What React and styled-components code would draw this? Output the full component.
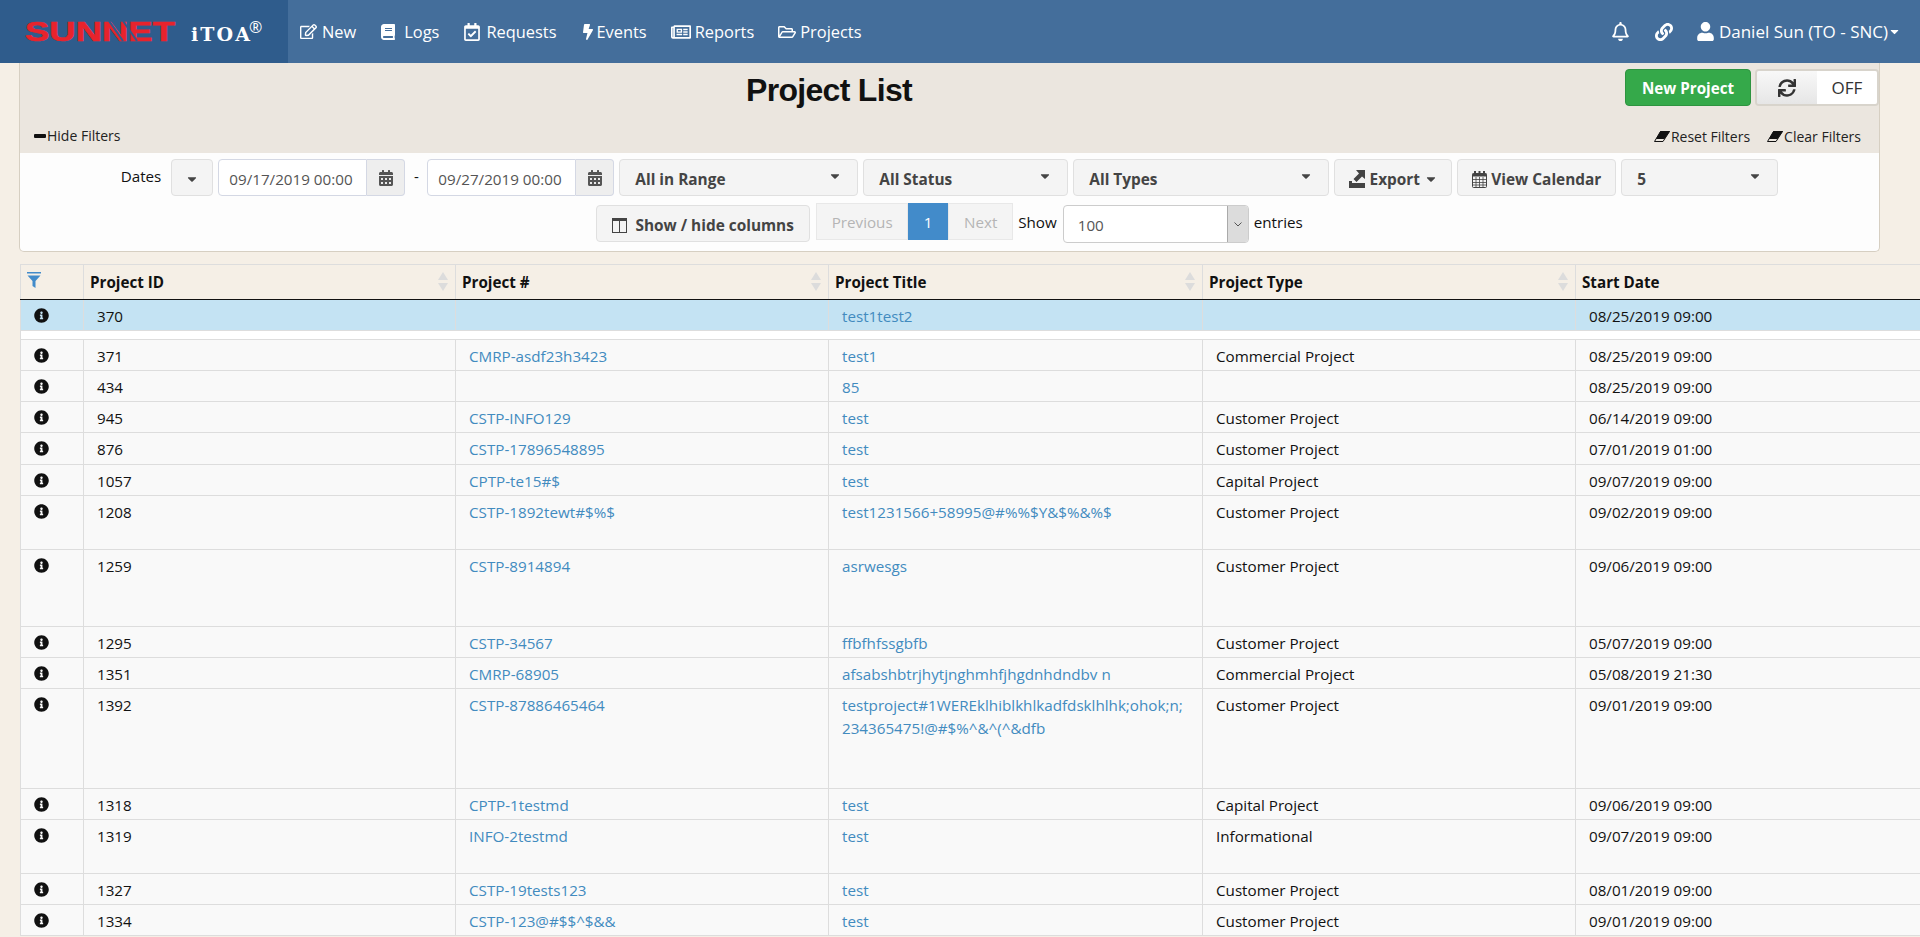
import styled, { createGlobalStyle } from "styled-components";
import {
  FaRegEdit,
  FaBook,
  FaRegCalendarCheck,
  FaBolt,
  FaRegNewspaper,
  FaRegFolderOpen,
  FaRegBell,
  FaLink,
  FaUser,
  FaSync,
  FaInfoCircle,
  FaCalendarAlt,
  FaCaretDown,
} from "react-icons/fa";

const GlobalStyle = createGlobalStyle`
  html, body {
    margin: 0;
    height: 937px;
    overflow: hidden;
    background: #f5efe6;
    font-family: "Open Sans", sans-serif;
    font-size: 15.2px;
    color: #111;
  }
  * { box-sizing: border-box; }
`;

const navItems = [
  { label: "New", Icon: FaRegEdit, gap: 5, size: 17 },
  { label: "Logs", Icon: FaBook, gap: 8, size: 16 },
  { label: "Requests", Icon: FaRegCalendarCheck, gap: 5, size: 18 },
  { label: "Events", Icon: FaBolt, gap: 0, size: 16 },
  { label: "Reports", Icon: FaRegNewspaper, gap: 4, size: 20 },
  { label: "Projects", Icon: FaRegFolderOpen, gap: 4, size: 18 },
];

const rows = [
  { id: 371, num: "CMRP-asdf23h3423", title: "test1", type: "Commercial Project", date: "08/25/2019 09:00", h: 31 },
  { id: 434, num: "", title: "85", type: "", date: "08/25/2019 09:00", h: 31 },
  { id: 945, num: "CSTP-INFO129", title: "test", type: "Customer Project", date: "06/14/2019 09:00", h: 31 },
  { id: 876, num: "CSTP-17896548895", title: "test", type: "Customer Project", date: "07/01/2019 01:00", h: 32 },
  { id: 1057, num: "CPTP-te15#$", title: "test", type: "Capital Project", date: "09/07/2019 09:00", h: 31 },
  { id: 1208, num: "CSTP-1892tewt#$%$", title: "test1231566+58995@#%%$Y&$%&%$", type: "Customer Project", date: "09/02/2019 09:00", h: 54 },
  { id: 1259, num: "CSTP-8914894", title: "asrwesgs", type: "Customer Project", date: "09/06/2019 09:00", h: 77 },
  { id: 1295, num: "CSTP-34567", title: "ffbfhfssgbfb", type: "Customer Project", date: "05/07/2019 09:00", h: 31 },
  { id: 1351, num: "CMRP-68905", title: "afsabshbtrjhytjnghmhfjhgdnhdndbv n", type: "Commercial Project", date: "05/08/2019 21:30", h: 31 },
  { id: 1392, num: "CSTP-87886465464", title: "testproject#1WEREklhiblkhlkadfdsklhlhk;ohok;n;\n234365475!@#$%^&^(^&dfb", type: "Customer Project", date: "09/01/2019 09:00", h: 100 },
  { id: 1318, num: "CPTP-1testmd", title: "test", type: "Capital Project", date: "09/06/2019 09:00", h: 31 },
  { id: 1319, num: "INFO-2testmd", title: "test", type: "Informational", date: "09/07/2019 09:00", h: 54 },
  { id: 1327, num: "CSTP-19tests123", title: "test", type: "Customer Project", date: "08/01/2019 09:00", h: 31 },
  { id: 1334, num: "CSTP-123@#$$^$&&", title: "test", type: "Customer Project", date: "09/01/2019 09:00", h: 31 },
];

const columns = [
  { label: "Project ID", w: 372, sort: true },
  { label: "Project #", w: 373, sort: true },
  { label: "Project Title", w: 374, sort: true },
  { label: "Project Type", w: 373, sort: true },
  { label: "Start Date", w: 373, sort: false },
];

const Navbar = styled.nav`
  display: flex;
  align-items: center;
  height: 63px;
  background: #446e9b;
  color: #fff;
`;

const Brand = styled.div`
  display: flex;
  align-items: center;
  width: 288px;
  height: 100%;
  background: #2f5c8c;
  padding: 0 0 2px 25px;
`;

const NavLinks = styled.div`
  display: flex;
  align-items: center;
  gap: 24px;
  padding-left: 12px;
`;

const NavLink = styled.a`
  display: flex;
  align-items: center;
  gap: ${({ $gap }) => $gap}px;
  font-size: 16.4px;
  color: #fff;
`;

const NavRight = styled.div`
  display: flex;
  align-items: center;
  margin-left: auto;
  padding-right: 19px;
`;

const ChainIcon = styled(FaLink)`
  margin-left: 25px;
`;

const UserName = styled.span`
  display: flex;
  align-items: center;
  gap: 4px;
  font-size: 17px;
  margin-left: 23px;
`;

const UserCaret = styled(FaCaretDown)`
  margin-left: -4px;
`;

const Panel = styled.section`
  width: 1861px;
  margin-left: 19px;
  border: 1px solid #d6cfc2;
  border-top: 0;
  border-radius: 0 0 5px 5px;
  background: #fdfdfd;
`;

const PanelHead = styled.div`
  height: 90px;
  background: #ebe6df;
  padding-top: 6px;
`;

const HeadTop = styled.div`
  display: flex;
  align-items: flex-start;
  height: 37px;
`;

const Title = styled.h1`
  flex: 1;
  margin: 0;
  padding-left: 13px;
  text-align: center;
  font-family: "Liberation Sans", sans-serif;
  font-size: 32px;
  line-height: 43px;
  font-weight: 700;
  letter-spacing: -0.7px;
  color: #111;
`;

const NewButton = styled.button`
  width: 126px;
  height: 37px;
  border: 1px solid #2e9440;
  border-radius: 4px;
  background: #35a94a;
  color: #fff;
  font: 700 15.2px "Open Sans", sans-serif;
`;

const Toggle = styled.div`
  display: flex;
  width: 124px;
  height: 37px;
  margin-left: 4px;
  border: 2px solid #d8d4cc;
  border-radius: 4px;
  overflow: hidden;
`;

const ToggleIcon = styled.span`
  display: flex;
  align-items: center;
  justify-content: center;
  width: 60px;
  background: linear-gradient(#f8f8f8, #e6e6e6);
  color: #333;
  font-size: 18px;
`;

const ToggleLabel = styled.span`
  flex: 1;
  display: flex;
  align-items: center;
  justify-content: center;
  background: #fff;
  color: #333;
  font-size: 17px;
`;

const HeadLinks = styled.div`
  display: flex;
  align-items: center;
  justify-content: space-between;
  padding: 0 18px 0 14px;
  margin-top: 21px;
  line-height: 18px;
`;

const HeadLink = styled.span`
  display: inline-flex;
  align-items: center;
  gap: 1px;
  margin-left: ${({ $ml }) => $ml || 0}px;
  font-size: 14px;
  color: #222;
`;

const MinusMark = styled.span`
  display: block;
  width: 12px;
  height: 4px;
  background: #111;
  border-radius: 1px;
`;

const Filters = styled.div`
  padding: 6px 0 9px;
  display: flex;
  flex-direction: column;
  gap: 9px;
`;

const FilterRow = styled.div`
  display: flex;
  justify-content: center;
  gap: 5px;
  height: 37px;
`;

const DatesLabel = styled.span`
  font-size: 15.2px;
  line-height: 34px;
  margin-right: 5px;
`;

const Control = styled.button`
  display: flex;
  align-items: center;
  justify-content: ${({ $center }) => ($center ? "center" : "space-between")};
  width: ${({ $w }) => $w}px;
  height: 37px;
  padding: ${({ $center }) => ($center ? "3px 0 0" : "3px 15px 0")};
  border: 1px solid #e0e0e0;
  border-radius: 4px;
  background: #f4f4f4;
  color: #444;
  font: 700 15.4px "Open Sans", sans-serif;
`;

const ControlInner = styled.span`
  display: inline-flex;
  align-items: center;
  gap: ${({ $gap }) => $gap || 5}px;
`;

const DateGroup = styled.div`
  display: flex;
  width: 187px;
`;

const DateInput = styled.div`
  flex: 1;
  display: flex;
  align-items: center;
  padding: 2px 0 0 10px;
  border: 1px solid #d4d8e4;
  border-radius: 4px 0 0 4px;
  background: #fff;
  color: #555;
  font-size: 15.2px;
  white-space: nowrap;
`;

const DateAddon = styled.div`
  display: flex;
  align-items: center;
  justify-content: center;
  width: 38px;
  border: 1px solid #d4d8e4;
  border-left: 0;
  border-radius: 0 4px 4px 0;
  background: #eeeeee;
  color: #555;
  font-size: 16px;
`;

const Dash = styled.span`
  width: 12px;
  line-height: 34px;
  font-size: 15px;
  text-align: center;
`;

const Pager = styled.div`
  display: flex;
  height: 37px;
  margin: -2px 0 0 1px;
`;

const PageItem = styled.span`
  display: flex;
  align-items: center;
  justify-content: center;
  width: ${({ $w }) => $w}px;
  border: 1px solid ${({ $active }) => ($active ? "#428bca" : "#e8e8e8")};
  background: ${({ $active }) => ($active ? "#428bca" : "#f4f4f4")};
  color: ${({ $active }) => ($active ? "#fff" : "#b5b5b5")};
  font-size: 15.2px;
`;

const EntriesText = styled.span`
  font-size: 15.2px;
  align-self: center;
  margin-top: -4px;
`;

const LengthSelect = styled.div`
  display: flex;
  width: 186px;
  height: 38px;
  margin-left: 1px;
  border: 1px solid #ccc;
  border-radius: 4px;
  background: #fff;
  overflow: hidden;
`;

const LengthValue = styled.span`
  flex: 1;
  display: flex;
  align-items: center;
  padding: 2px 0 0 14px;
  font-size: 15.2px;
  color: #555;
`;

const LengthArrow = styled.span`
  display: flex;
  align-items: center;
  justify-content: center;
  width: 21px;
  background: #dcdcdc;
  border-left: 1px solid #aaa;
`;

const TableWrap = styled.div`
  margin: 12px 0 0 20px;
  width: 1928px;
`;

const Table = styled.table`
  width: 1928px;
  table-layout: fixed;
  border-collapse: collapse;
  font-size: 15.2px;
`;

const HeadCell = styled.th`
  position: relative;
  width: ${({ $w }) => $w}px;
  height: 35px;
  padding: 0 6px;
  border: 1px solid #ddd;
  border-bottom: 1px solid #111;
  text-align: left;
  font-weight: 700;
  color: #111;
  background: #f5efe6;
`;

const SortMark = styled.span`
  position: absolute;
  right: 7px;
  top: 7px;
  display: flex;
`;

const Row = styled.tr`
  height: ${({ $h }) => $h}px;
  background: ${({ $bg }) => $bg || "#f9f9f9"};
`;

const Cell = styled.td`
  padding: 5px 13px 0;
  border: 1px solid #ddd;
  vertical-align: top;
  line-height: 23px;
  white-space: pre-line;
  color: #111;
`;

const InfoCell = styled.td`
  padding: 8px 0 0 13px;
  border: 1px solid #ddd;
  vertical-align: top;
  text-align: left;
  line-height: 0;
  font-size: 15px;
  color: #111;
`;

const BlankCell = styled.td`
  padding: 0;
  border: 1px solid #ddd;
`;

const TableLink = styled.a`
  color: #428bbf;
`;

const TopCaret = styled(FaCaretDown)`
  font-size: 14px;
  color: #444;
  margin-top: -6px;
`;

const Caret = styled(FaCaretDown)`
  font-size: 14px;
  color: #444;
`;

const Logo = () => (
  <svg width="240" height="40" viewBox="0 0 240 40">
    <text x="0" y="30" fontFamily="Liberation Sans, sans-serif" fontWeight="700" fontSize="28" fill="#e8232c" stroke="#e8232c" strokeWidth="0.6" textLength="150" lengthAdjust="spacingAndGlyphs">
      SUNNET
    </text>
    <path d="M84 10 L98 30 M98 10 L112 30" stroke="#2f5c8c" strokeWidth="2" />
    <text x="166" y="30" fontFamily="DejaVu Serif, serif" fontWeight="700" fontSize="19" fill="#fff" textLength="59" lengthAdjust="spacing">
      iTOA
    </text>
    <text x="224" y="22" fontFamily="Open Sans, sans-serif" fontSize="16" fill="#fff">
      ®
    </text>
  </svg>
);

const FilterIcon = () => (
  <svg width="14" height="16" viewBox="0 0 14 16">
    <rect x="0" y="0" width="14" height="1.5" fill="#428bca" />
    <path d="M0.5 3.5 H13.5 L8.5 9 V16 L5.5 14 V9 Z" fill="#428bca" />
  </svg>
);

const SortIcon = () => (
  <svg width="10" height="19" viewBox="0 0 10 19">
    <path d="M5 0 L10 8 H0 Z M0 11 H10 L5 19 Z" fill="#dcdcdc" />
  </svg>
);

const EraserIcon = () => (
  <svg width="16" height="11" viewBox="0 0 16 11">
    <path d="M6.5 0.5 H15.5 L9 10.5 H0.5 Z" fill="none" stroke="#111" />
    <path d="M6.5 0 H16 L10.5 8 H2 Z" fill="#111" />
  </svg>
);

const ColumnsIcon = () => (
  <svg width="15" height="15" viewBox="0 0 15 15">
    <rect x="0.5" y="1" width="14" height="13.5" fill="none" stroke="#444" />
    <rect x="0" y="0" width="15" height="3" fill="#444" />
    <path d="M7.5 2 V15" stroke="#444" />
  </svg>
);

const ExportIcon = () => (
  <svg width="17" height="18" viewBox="0 0 17 18">
    <path d="M0 11 H3 V13 H16 V18 H0 Z" fill="#444" />
    <path d="M7 0 H16 V9 L13 6.5 L7.5 12 L4.5 9 L10 3.5 Z" fill="#444" />
  </svg>
);

const CalendarGridIcon = () => (
  <svg width="15" height="17" viewBox="0 0 15 17">
    <rect x="0.5" y="2.5" width="14" height="14" rx="1" fill="none" stroke="#444" />
    <rect x="0.5" y="2.5" width="14" height="3" fill="#444" />
    <path d="M3 0 V4 M7.5 0 V4 M12 0 V4" stroke="#444" strokeWidth="2" />
    <path d="M0 8.5 H15 M0 11.5 H15 M0 14 H15 M4 6 V17 M7.5 6 V17 M11 6 V17" stroke="#444" strokeWidth="0.8" />
  </svg>
);

const ChevronIcon = () => (
  <svg width="8" height="5" viewBox="0 0 8 5">
    <path d="M0.5 0.5 L4 4 L7.5 0.5" fill="none" stroke="#555" />
  </svg>
);

const DateField = ({ value }) => (
  <DateGroup>
    <DateInput>{value}</DateInput>
    <DateAddon>
      <FaCalendarAlt />
    </DateAddon>
  </DateGroup>
);

const App = () => {
  return (
    <>
      <GlobalStyle />
      <Navbar>
        <Brand>
          <Logo />
        </Brand>
        <NavLinks>
          {navItems.map(({ label, Icon, gap, size }) => (
            <NavLink key={label} $gap={gap}>
              <Icon size={size} />
              {label}
            </NavLink>
          ))}
        </NavLinks>
        <NavRight>
          <FaRegBell size={19} />
          <ChainIcon size={18} />
          <UserName>
            <FaUser size={19} />
            Daniel Sun (TO - SNC)
            <UserCaret size={13} />
          </UserName>
        </NavRight>
      </Navbar>

      <Panel>
        <PanelHead>
          <HeadTop>
            <Title>Project List</Title>
            <NewButton>New Project</NewButton>
            <Toggle>
              <ToggleIcon>
                <FaSync />
              </ToggleIcon>
              <ToggleLabel>OFF</ToggleLabel>
            </Toggle>
          </HeadTop>
          <HeadLinks>
            <HeadLink>
              <MinusMark />
              Hide Filters
            </HeadLink>
            <div>
              <HeadLink>
                <EraserIcon />
                Reset Filters
              </HeadLink>
              <HeadLink $ml={17}>
                <EraserIcon />
                Clear Filters
              </HeadLink>
            </div>
          </HeadLinks>
        </PanelHead>

        <Filters>
          <FilterRow>
            <DatesLabel>Dates</DatesLabel>
            <Control $w={42} $center>
              <Caret />
            </Control>
            <DateField value="09/17/2019 00:00" />
            <Dash>-</Dash>
            <DateField value="09/27/2019 00:00" />
            <Control $w={239}>
              All in Range
              <TopCaret />
            </Control>
            <Control $w={205}>
              All Status
              <TopCaret />
            </Control>
            <Control $w={256}>
              All Types
              <TopCaret />
            </Control>
            <Control $w={118} $center>
              <ControlInner $gap={4}>
                <ExportIcon />
                Export
                <Caret />
              </ControlInner>
            </Control>
            <Control $w={159} $center>
              <ControlInner $gap={4}>
                <CalendarGridIcon />
                View Calendar
              </ControlInner>
            </Control>
            <Control $w={157}>
              5
              <TopCaret />
            </Control>
          </FilterRow>
          <FilterRow>
            <Control $w={214} $center>
              <ControlInner $gap={8}>
                <ColumnsIcon />
                Show / hide columns
              </ControlInner>
            </Control>
            <Pager>
              <PageItem $w={92}>Previous</PageItem>
              <PageItem $w={40} $active>
                1
              </PageItem>
              <PageItem $w={65}>Next</PageItem>
            </Pager>
            <EntriesText>Show</EntriesText>
            <LengthSelect>
              <LengthValue>100</LengthValue>
              <LengthArrow>
                <ChevronIcon />
              </LengthArrow>
            </LengthSelect>
            <EntriesText>entries</EntriesText>
          </FilterRow>
        </Filters>
      </Panel>

      <TableWrap>
        <Table>
          <thead>
            <tr>
              <HeadCell $w={63}>
                <FilterIcon />
              </HeadCell>
              {columns.map((col) => (
                <HeadCell key={col.label} $w={col.w}>
                  {col.label}
                  {col.sort && (
                    <SortMark>
                      <SortIcon />
                    </SortMark>
                  )}
                </HeadCell>
              ))}
            </tr>
          </thead>
          <tbody>
            <Row $h={31} $bg="#c4e3f3">
              <InfoCell>
                <FaInfoCircle />
              </InfoCell>
              <Cell>370</Cell>
              <Cell />
              <Cell>
                <TableLink>test1test2</TableLink>
              </Cell>
              <Cell />
              <Cell>08/25/2019 09:00</Cell>
            </Row>
            <Row $h={9} $bg="#fff">
              <BlankCell colSpan={6} />
            </Row>
            {rows.map((r) => (
              <Row key={r.id} $h={r.h}>
                <InfoCell>
                  <FaInfoCircle />
                </InfoCell>
                <Cell>{r.id}</Cell>
                <Cell>
                  <TableLink>{r.num}</TableLink>
                </Cell>
                <Cell>
                  <TableLink>{r.title}</TableLink>
                </Cell>
                <Cell>{r.type}</Cell>
                <Cell>{r.date}</Cell>
              </Row>
            ))}
          </tbody>
        </Table>
      </TableWrap>
    </>
  );
};

export default App;
